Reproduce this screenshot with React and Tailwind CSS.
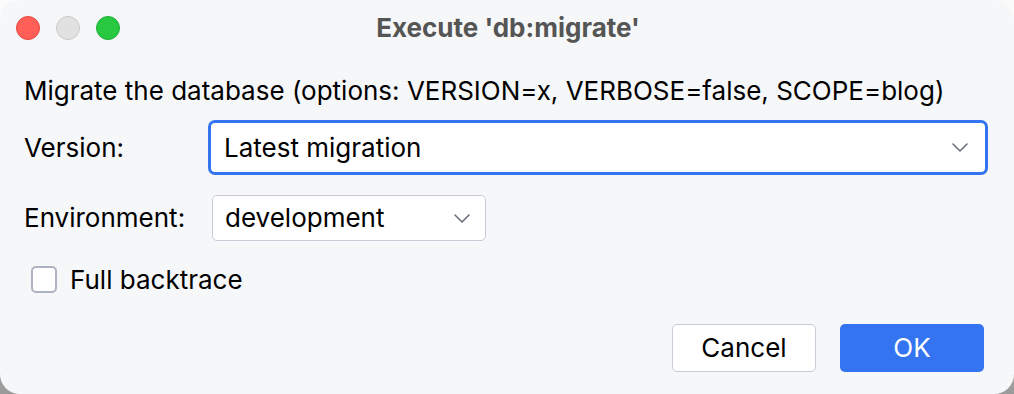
const FONT = { fontFamily: 'Inter, "Noto Sans", sans-serif' }

function Chevron({ className }) {
  return (
    <svg className={className} viewBox="0 0 16 9" fill="none">
      <path d="M1 1l7 7 7-7" stroke="#6c707e" strokeWidth="1.6" strokeLinecap="round" strokeLinejoin="round" />
    </svg>
  )
}

export default function App() {
  return (
    <div className="w-[1014px] h-[394px] bg-gradient-to-b from-[#fbfbfb] via-[#f0f0f0] to-[#9a9a9a]" style={FONT}>
      <div className="h-full rounded-[20px] bg-[#f6f7f9] flex flex-col text-black">
        {/* Title bar */}
        <div className="h-[56px] grid grid-cols-[1fr_auto_1fr] items-center">
          <div className="flex gap-4 pl-4">
            <div className="w-6 h-6 rounded-full bg-[#ff5f57] border border-[#e2463f]" />
            <div className="w-6 h-6 rounded-full bg-[#e1e1e1] border border-[#c9c9c9]" />
            <div className="w-6 h-6 rounded-full bg-[#28c840] border border-[#1fae35]" />
          </div>
          <div className="text-[26px] leading-[30px] font-bold text-[#555555] pl-[2px]">Execute 'db:migrate'</div>
          <div />
        </div>

        <div className="pl-6 pr-[26px] text-[26px] leading-[30px]">
          <div className="mt-[20px] h-[30px]">
            Migrate the database (options: VERSION=x, VERBOSE=false, SCOPE=blog)
          </div>

          {/* Version */}
          <div className="mt-[14px] flex items-center h-[55px]">
            <div className="w-[184px]">Version:</div>
            <div className="w-[780px] h-[55px] bg-white border-[3px] border-[#3574f0] rounded-[7px] flex items-center pl-[13px] pr-[17px]">
              <span className="flex-1">Latest migration</span>
              <Chevron className="w-4 h-[9px]" />
            </div>
          </div>

          {/* Environment */}
          <div className="mt-[20px] flex items-center h-[46px]">
            <div className="w-[188px]">Environment:</div>
            <div className="w-[274px] h-[46px] bg-white border-[1.5px] border-[#c9ccd6] rounded-[5px] flex items-center pl-[12px] pr-[15px]">
              <span className="flex-1">development</span>
              <Chevron className="w-4 h-[9px]" />
            </div>
          </div>

          {/* Checkbox */}
          <div className="mt-[25px] flex items-center h-[27px] pl-[7px] gap-[13px]">
            <div className="w-[26px] h-[27px] bg-white border-2 border-[#aeb3c2] rounded-[5px]" />
            <span>Full backtrace</span>
          </div>

          {/* Buttons */}
          <div className="mt-[31px] flex justify-end gap-6 pr-1">
            <button className="w-[144px] h-[48px] bg-white border-[1.5px] border-[#c9ccd6] rounded-[5px]">
              Cancel
            </button>
            <button className="w-[144px] h-[48px] bg-[#3574f0] rounded-[5px] text-white">
              OK
            </button>
          </div>
        </div>
      </div>
    </div>
  )
}
